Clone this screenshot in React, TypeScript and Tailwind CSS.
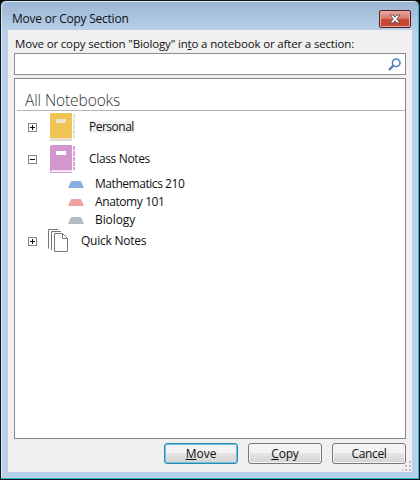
import type { ReactNode } from "react";

function Label({ children, className = "" }: { children: ReactNode; className?: string }) {
  return <span className={`whitespace-nowrap leading-4 ${className}`}>{children}</span>;
}

function Expander({ open = false }: { open?: boolean }) {
  return (
    <svg width="9" height="9" viewBox="0 0 9 9" shapeRendering="crispEdges" className="shrink-0">
      <rect x="0.5" y="0.5" width="8" height="8" fill="#fff" stroke="#858585" />
      <path d={open ? "M2 4.5h5" : "M2 4.5h5M4.5 2v5"} stroke="#111" />
    </svg>
  );
}

function Notebook({ color, edge, spine }: { color: string; edge: string; spine: string }) {
  return (
    <svg width="26" height="28" viewBox="0 0 26 28" className="block shrink-0">
      <path d="M0 1.5Q0 0 1.5 0H22V25.5H0Z" fill={color} />
      <path d="M0 25H22V28H1Q0 28 0 27Z" fill={edge} />
      <rect x="1" y="25.3" width="21" height="1.5" fill={spine} />
      <rect x="6" y="6" width="10" height="4" fill={spine} />
      <path d="M24 1v4M24 6v5M24 12v4M24 17v4M24 22v3" stroke={edge} strokeWidth="1.8" />
    </svg>
  );
}

function Tab({ color }: { color: string }) {
  return (
    <svg width="16" height="7" viewBox="0 0 16 7" className="shrink-0">
      <path d="M0 7L2.6 1Q3 0 4 0H12Q13 0 13.4 1L16 7Z" fill={color} />
    </svg>
  );
}

function Section({ color, name, className }: { color: string; name: string; className: string }) {
  return (
    <div className="flex h-[18px] items-center pl-[53px]">
      <Tab color={color} />
      <Label className={`ml-[11px] ${className}`}>{name}</Label>
    </div>
  );
}

function Button({ children, primary = false }: { children: ReactNode; primary?: boolean }) {
  return (
    <button
      className={`flex h-[21px] w-[74px] items-center justify-center rounded-[3px] border bg-linear-to-b from-[#f3f3f3] from-45% via-[#e6e6e6] via-50% to-[#d2d2d2] ${
        primary ? "border-[#3586ab] shadow-[inset_0_0_0_1px_#66c4e6]" : "border-[#777] shadow-[inset_0_0_0_1px_#f6f6f6]"
      }`}
    >
      {children}
    </button>
  );
}

export default function App() {
  return (
    <div className="h-[480px] w-[420px] overflow-hidden bg-black font-['Open_Sans','Noto_Sans',sans-serif] text-[12px] text-[#111]">
      <div className="h-[480px] w-[420px] rounded-t-[6px] border-x border-y border-[#10161c] bg-[#b9cfe9] bg-linear-to-b from-[#9ab5d3] to-[#b9d0e9] to-[30px] shadow-[inset_-1px_-1px_0_#36b5cd,inset_1px_1px_0_#dae8f5]">
        <div className="flex h-[29px] items-center justify-between pr-[8px] pl-[11px]">
          <Label className="mt-[7px] tracking-[-0.24px]">Move or Copy Section</Label>
          <button className="mt-[7px] flex h-[18px] w-[32px] items-center justify-center rounded-[2px] border border-[#551e23] bg-linear-to-b from-[#e8aaa0] from-0% via-[#d57568] via-48% to-[#c84735] to-52% shadow-[inset_0_0_0_1px_#e5a69e]">
            <svg width="12" height="10" viewBox="0 0 12 10">
              <path d="M1 1h3l2 2.2L8 1h3L7.8 5 11 9H8L6 6.8 4 9H1l3.2-4Z" fill="#fff" stroke="#5c454b" strokeWidth=".9" />
            </svg>
          </button>
        </div>
        <div className="mx-[7px] flex h-[442px] flex-col bg-[#f0f0f0] px-[6px]">
          <div className="flex h-[23px] items-center pt-[5px] pl-[1px]">
            <Label className="text-[11.5px] tracking-[-0.16px]">
              Move or copy section "Biology" in<u className="underline-offset-1">t</u>o a notebook or after a section:
            </Label>
          </div>
          <div className="flex h-[22px] w-[392px] shrink-0 items-center justify-end border border-[#8d8d8d] bg-white pr-[4px]">
            <svg width="13" height="13" viewBox="0 0 13 13" fill="none" stroke="#4d7fb6">
              <circle cx="8.2" cy="4.7" r="3.8" strokeWidth="1.5" />
              <path d="M5.3 7.6L1 12" strokeWidth="2.3" />
            </svg>
          </div>
          <div className="mt-[3px] h-[361px] w-[392px] shrink-0 border border-[#828790] bg-white">
            <div className="ml-[2px] flex h-[32px] items-end border-b border-[#b5b5b5] pl-[8px]">
              <Label className="text-[15.5px] font-light leading-[19px] tracking-[-0.1px] text-[#333]">All Notebooks</Label>
            </div>
            <div className="flex h-[32px] items-center pl-[13px]">
              <Expander />
              <div className="ml-[13px]"><Notebook color="#efc455" edge="#e0dbd0" spine="#eee3cc" /></div>
              <Label className="ml-[13px] bg-[#f0f0f0] tracking-[-0.5px] leading-[12px]">Personal</Label>
            </div>
            <div className="flex h-[32px] items-center pl-[13px]">
              <Expander open />
              <div className="ml-[13px]"><Notebook color="#d397d0" edge="#d397d0" spine="#fff" /></div>
              <Label className="ml-[13px] tracking-[-0.35px]">Class Notes</Label>
            </div>
            <Section color="#86b1df" name="Mathematics 210" className="tracking-[-0.45px]" />
            <Section color="#f0a2a2" name="Anatomy 101" className="tracking-[-0.4px]" />
            <Section color="#b5bbc5" name="Biology" className="tracking-[-0.1px]" />
            <div className="flex h-[24px] items-center pl-[13px]">
              <Expander />
              <svg width="21" height="24" viewBox="0 0 21 24" fill="none" stroke="#777" className="ml-[11px] shrink-0">
                <path d="M.5 19.5V.5H10M3.5 21V2.5H13" />
                <path d="M6.5 4.5H14.5L19.5 9.5V22.5H6.5Z" fill="#fff" />
                <path d="M14.5 4.5V9.5H19.5" />
              </svg>
              <Label className="ml-[12px] tracking-[-0.25px]">Quick Notes</Label>
            </div>
          </div>
          <div className="relative mt-[4px] flex h-[29px] w-[392px] items-start justify-end gap-[10px]">
            <Button primary><Label>
              <u>M</u>ove</Label></Button>
            <Button><Label className="tracking-[-0.2px]"><u>C</u>opy</Label></Button>
            <Button><Label className="tracking-[-0.35px]">Cancel</Label></Button>
            <svg width="10" height="10" viewBox="0 0 10 10" fill="#bdbdbd" className="absolute -right-[6px] bottom-[1px]">
              <path d="M7 0h2v2H7zM7 4h2v2H7zM7 8h2v2H7zM3 4h2v2H3zM3 8h2v2H3zM0 8h1v2H0z" />
            </svg>
          </div>
        </div>
      </div>
    </div>
  );
}
